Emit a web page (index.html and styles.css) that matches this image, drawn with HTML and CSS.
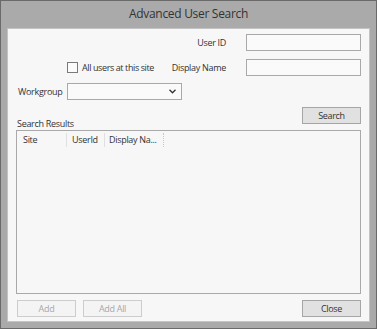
FILE: index.html
```html
<!DOCTYPE html>
<html>
<head>
<meta charset="utf-8">
<link rel="stylesheet" href="styles.css">
</head>
<body>
<div class="window">
  <div class="titlebar">Advanced User Search</div>
  <div class="content">
    <div class="row row-userid">
      <label class="lbl">User ID</label>
      <div class="input"></div>
    </div>
    <div class="row row-display">
      <span class="checkbox"></span>
      <span class="cblabel">All users at this site</span>
      <span class="spacer"></span>
      <label class="lbl">Display Name</label>
      <div class="input"></div>
    </div>
    <div class="row row-workgroup">
      <label class="lbl wglabel">Workgroup</label>
      <div class="select">
        <svg class="chev" width="7" height="5" viewBox="0 0 7 5"><path d="M0.5 0.8 L3.5 3.8 L6.5 0.8" fill="none" stroke="#333" stroke-width="1.3"/></svg>
      </div>
    </div>
    <div class="row row-search">
      <span class="srlabel">Search Results</span>
      <button class="btn">Search</button>
    </div>
    <div class="listbox">
      <div class="lvheader">
        <div class="col col-site">Site</div>
        <div class="col col-user">UserId</div>
        <div class="col col-name">Display Na...</div>
      </div>
    </div>
    <div class="row row-bottom">
      <button class="btn disabled">Add</button>
      <button class="btn disabled">Add All</button>
      <span class="spacer"></span>
      <button class="btn">Close</button>
    </div>
  </div>
</div>
</body>
</html>
```
FILE: styles.css
```css
html, body {
  margin: 0;
  padding: 0;
}
body {
  width: 377px;
  height: 329px;
  overflow: hidden;
  font-family: "Open Sans", "Noto Sans", sans-serif;
  font-size: 9px;
  color: #333;
}
.window {
  box-sizing: border-box;
  width: 377px;
  height: 329px;
  background: #aaaaaa;
  border: 1px solid #6a6a6a;
  display: flex;
  flex-direction: column;
}
.titlebar {
  height: 27px;
  line-height: 25px;
  text-align: center;
  font-size: 12px;
  color: #333;
  letter-spacing: -0.3px;
  flex: none;
}
.content {
  margin: 0 6px 6px 6px;
  flex: 1;
  background: #f7f7f7;
  border: 1px solid #c4c4c4;
  box-sizing: border-box;
  padding: 5px 8px 0 8px;
  display: flex;
  flex-direction: column;
}
.row {
  display: flex;
  align-items: center;
  flex: none;
}
.lbl {
  letter-spacing: -0.3px;
  color: #333;
}
.input {
  width: 115px;
  height: 17px;
  box-sizing: border-box;
  border: 1px solid #a9a9a9;
  background: #fafafa;
  margin-left: 20px;
}
.row-userid {
  justify-content: flex-end;
  height: 17px;
}
.row-display {
  margin-top: 8px;
  height: 17px;
}
.checkbox {
  width: 11px;
  height: 11px;
  box-sizing: border-box;
  border: 1px solid #7a7a7a;
  background: #fbfbfb;
  margin-left: 51px;
}
.cblabel {
  margin-left: 4px;
  letter-spacing: -0.4px;
}
.spacer {
  flex: 1;
}
.row-workgroup {
  margin-top: 7px;
  height: 17px;
}
.wglabel {
  margin-left: 2px;
  width: 49px;
}
.select {
  width: 115px;
  height: 17px;
  box-sizing: border-box;
  border: 1px solid #a9a9a9;
  background: #fafafa;
  display: flex;
  align-items: center;
  justify-content: flex-end;
  padding-right: 5px;
}
.row-search {
  margin-top: 7px;
  height: 23px;
  justify-content: space-between;
  align-items: flex-start;
}
.srlabel {
  align-self: flex-end;
  line-height: 12px;
  margin-left: 1px;
  margin-bottom: 0;
  letter-spacing: -0.3px;
}
.btn {
  width: 59px;
  height: 17px;
  box-sizing: border-box;
  border: 1px solid #a6a6a6;
  background: #e1e1e1;
  font-family: inherit;
  font-size: 9px;
  letter-spacing: -0.3px;
  color: #333;
  padding: 0;
  margin: 0;
  line-height: 15px;
}
.btn.disabled {
  background: #f4f4f4;
  border-color: #cdcdcd;
  color: #a8a8a8;
}
.listbox {
  height: 164px;
  box-sizing: border-box;
  border: 1px solid #a9a9a9;
  background: #f7f7f7;
  flex: none;
}
.lvheader {
  display: flex;
  height: 17px;
  margin-top: 2px;
}
.col {
  box-sizing: border-box;
  line-height: 14px;
  letter-spacing: -0.3px;
  border-right: 1px solid #e0e0e0;
  height: 14px;
}
.col-site {
  width: 50px;
  padding-left: 6px;
}
.col-user {
  width: 38px;
  padding-left: 5px;
}
.col-name {
  width: 59px;
  padding-left: 4px;
  border-right: 1px dotted #c8c8c8;
}
.row-bottom {
  margin-top: 6px;
  height: 17px;
  padding-left: 1px;
  gap: 7px;
}
```
